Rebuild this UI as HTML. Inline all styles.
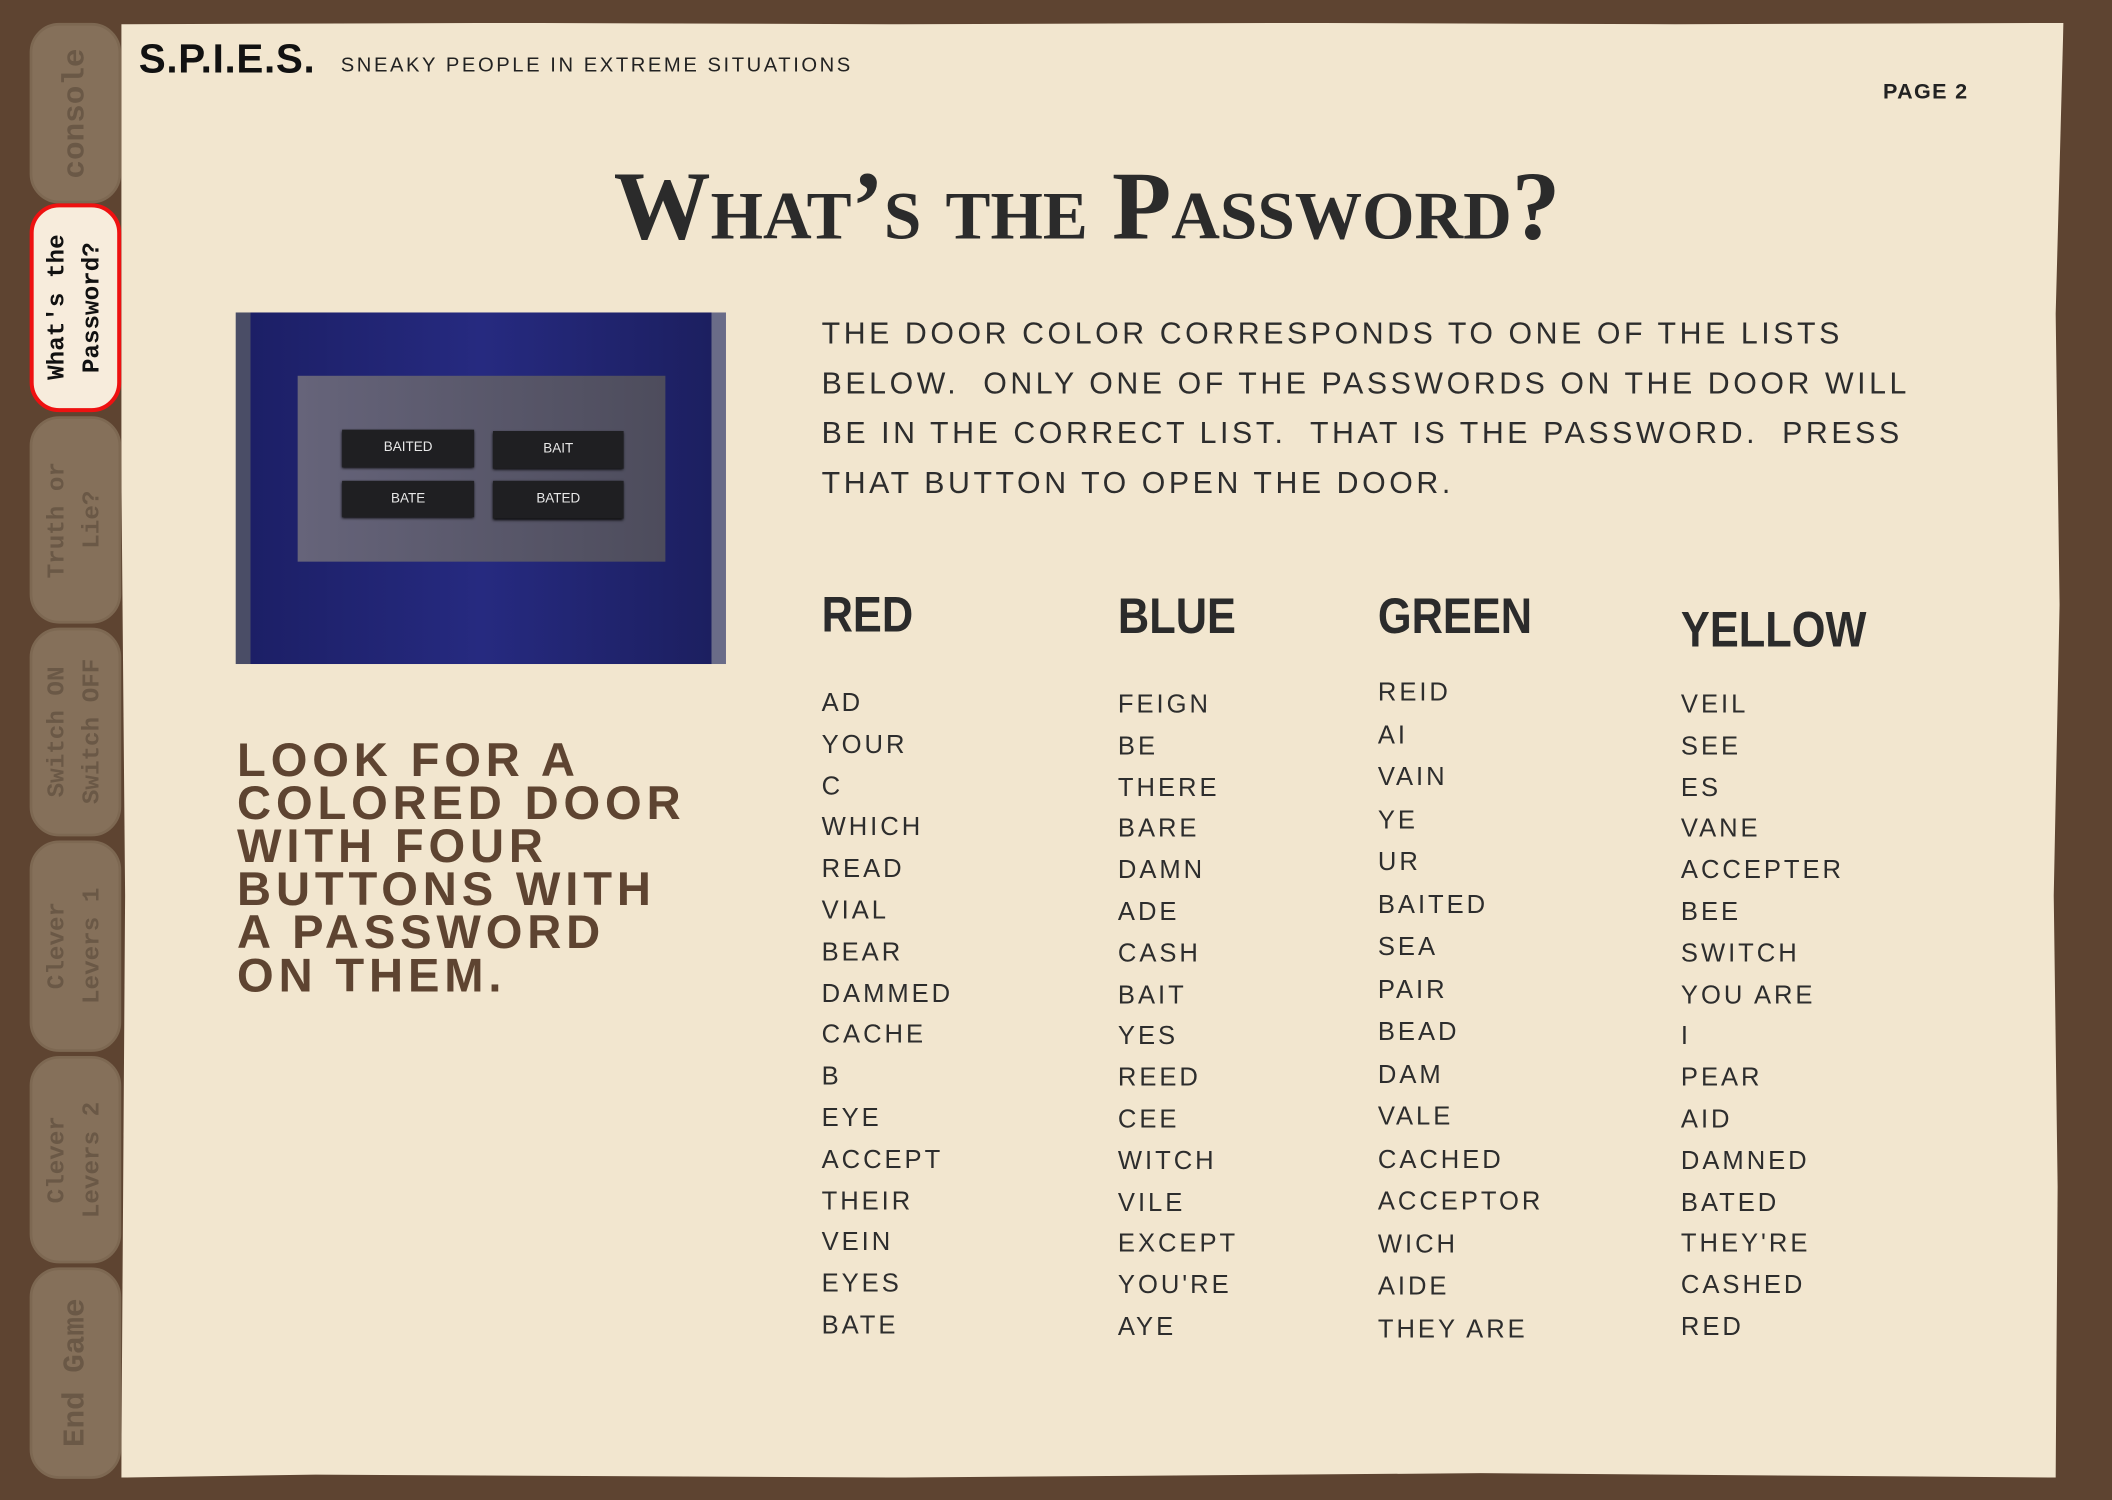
<!DOCTYPE html>
<html><head><meta charset="utf-8"><style>
html,body{margin:0;padding:0;background:#5e4431;width:2112px;height:1500px;overflow:hidden}
#s{position:absolute;left:0;top:0;width:1568px;height:1114px;transform:scale(1.3469);transform-origin:0 0;font-family:"Liberation Sans",sans-serif}
.paper{position:absolute;left:90px;top:17px;width:1442px;height:1080px;background:#f2e6cf;clip-path:polygon(0 1px,20% 0,40% 1px,60% 0,80% 1px,100% 0,99.6% 20%,99.8% 40%,99.5% 60%,99.7% 80%,99.6% 100%,70% 99.7%,40% 100%,10% 99.8%,0 100%,0.2% 60%,0 30%)}
.tab{position:absolute;left:22px;width:68px;border-radius:22px;background:#85705a;border:2px solid #7d6852;box-sizing:border-box;display:flex;align-items:center;justify-content:center}
.tab span{writing-mode:vertical-rl;transform:rotate(180deg);font-family:"Liberation Mono",monospace;font-weight:bold;color:#6a5846;text-align:center;font-size:18px;line-height:26px;white-space:pre}
.tab.act{background:#f7ecdc;border:3px solid #ee1111}
.tab.act span{color:#111}
.abs{position:absolute;white-space:nowrap}
.p{font-size:22.5px;letter-spacing:2.65px;color:#2d2d2d;line-height:37px}
.h{font-family:"Liberation Sans Narrow","Liberation Sans",sans-serif;font-weight:bold;font-size:37px;color:#2b2b2b;transform:scaleX(.87);transform-origin:0 0}
.l{font-size:19px;letter-spacing:2.2px;color:#2d2d2d}
.l div{height:30.8px;line-height:30.8px}
.btn{position:absolute;background:#1f1f22;color:#e8e8e8;font-size:10px;text-align:center;box-shadow:0 1px 2px #000}
</style></head><body><div id="s">
<div class="paper"></div>
<div class="tab" style="top:17px;height:134px"><span style="font-size:23px">console</span></div>
<div class="tab act" style="top:151px;height:155px"><span>What's the
Password?</span></div>
<div class="tab" style="top:309px;height:154px"><span>Truth or
Lie?</span></div>
<div class="tab" style="top:466px;height:155px"><span>Switch ON
Switch OFF</span></div>
<div class="tab" style="top:624px;height:157px"><span>Clever
Levers 1</span></div>
<div class="tab" style="top:784px;height:154px"><span>Clever
Levers 2</span></div>
<div class="tab" style="top:941px;height:157px"><span style="font-size:23px">End Game</span></div>

<div class="abs" style="left:103px;top:28px;font-size:30px;font-weight:bold;color:#111;letter-spacing:.5px">S.P.I.E.S.</div>
<div class="abs" style="left:253px;top:40px;font-size:15px;letter-spacing:1.9px;color:#222">SNEAKY PEOPLE IN EXTREME SITUATIONS</div>
<div class="abs" style="left:1398px;top:60px;font-size:16px;font-weight:bold;letter-spacing:1px;color:#222">PAGE 2</div>
<div class="abs" style="left:400px;width:814px;top:112px;text-align:center;font-family:'Liberation Serif',serif;font-weight:bold;font-variant:small-caps;font-size:72px;color:#2b2b2b;letter-spacing:0">What’s the Password?</div>

<div class="abs" style="left:175px;top:232px;width:364px;height:261px;background:linear-gradient(90deg,#4a4d66 0 3%,#1c1f66 3%,#262a80 50%,#1c1f60 97%,#6a6c88 97%);"></div>
<div class="abs" style="left:221px;top:279px;width:273px;height:138px;background:linear-gradient(90deg,#66647a,#4d4c5c)"></div>
<div class="btn" style="left:254px;top:319px;width:98px;height:28px;line-height:28px">BAITED</div>
<div class="btn" style="left:366px;top:320px;width:97px;height:28px;line-height:28px">BAIT</div>
<div class="btn" style="left:254px;top:357px;width:98px;height:27px;line-height:27px">BATE</div>
<div class="btn" style="left:366px;top:357px;width:97px;height:28px;line-height:28px">BATED</div>

<div class="abs p" style="left:610px;top:229px">THE DOOR COLOR CORRESPONDS TO ONE OF THE LISTS<br>BELOW.&nbsp; ONLY ONE OF THE PASSWORDS ON THE DOOR WILL<br>BE IN THE CORRECT LIST.&nbsp; THAT IS THE PASSWORD.&nbsp; PRESS<br>THAT BUTTON TO OPEN THE DOOR.</div>

<div class="abs" style="left:176px;top:549px;font-size:35px;font-weight:bold;letter-spacing:3.6px;line-height:32px;color:#5e4431">LOOK FOR A<br>COLORED DOOR<br>WITH FOUR<br>BUTTONS WITH<br>A PASSWORD<br>ON THEM.</div>

<div class="abs h" style="left:610px;top:436px">RED</div>
<div class="abs h" style="left:830px;top:437px">BLUE</div>
<div class="abs h" style="left:1023px;top:437px">GREEN</div>
<div class="abs h" style="left:1248px;top:447px">YELLOW</div>

<div class="abs l" style="left:610px;top:508px"><div>AD</div><div>YOUR</div><div>C</div><div>WHICH</div><div>READ</div><div>VIAL</div><div>BEAR</div><div>DAMMED</div><div>CACHE</div><div>B</div><div>EYE</div><div>ACCEPT</div><div>THEIR</div><div>VEIN</div><div>EYES</div><div>BATE</div></div>
<div class="abs l" style="left:830px;top:509px"><div>FEIGN</div><div>BE</div><div>THERE</div><div>BARE</div><div>DAMN</div><div>ADE</div><div>CASH</div><div>BAIT</div><div>YES</div><div>REED</div><div>CEE</div><div>WITCH</div><div>VILE</div><div>EXCEPT</div><div>YOU'RE</div><div>AYE</div></div>
<div class="abs l" style="left:1023px;top:500px"><div style="height:31.5px">REID</div><div style="height:31.5px">AI</div><div style="height:31.5px">VAIN</div><div style="height:31.5px">YE</div><div style="height:31.5px">UR</div><div style="height:31.5px">BAITED</div><div style="height:31.5px">SEA</div><div style="height:31.5px">PAIR</div><div style="height:31.5px">BEAD</div><div style="height:31.5px">DAM</div><div style="height:31.5px">VALE</div><div style="height:31.5px">CACHED</div><div style="height:31.5px">ACCEPTOR</div><div style="height:31.5px">WICH</div><div style="height:31.5px">AIDE</div><div style="height:31.5px">THEY ARE</div></div>
<div class="abs l" style="left:1248px;top:509px"><div>VEIL</div><div>SEE</div><div>ES</div><div>VANE</div><div>ACCEPTER</div><div>BEE</div><div>SWITCH</div><div>YOU ARE</div><div>I</div><div>PEAR</div><div>AID</div><div>DAMNED</div><div>BATED</div><div>THEY'RE</div><div>CASHED</div><div>RED</div></div>
</div></body></html>
